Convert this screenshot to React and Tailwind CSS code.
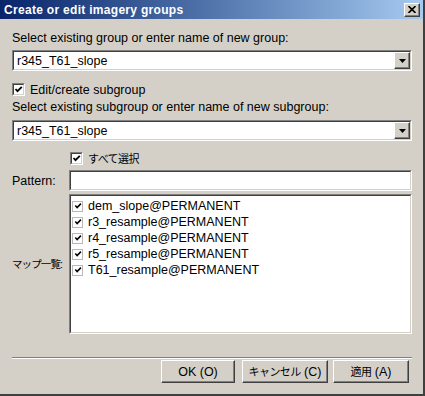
const sunken =
  "border border-t-[#808080] border-l-[#808080] border-b-white border-r-white";
const sunkenInner =
  "border border-t-[#404040] border-l-[#404040] border-b-[#d4d0c8] border-r-[#d4d0c8]";
const raised =
  "border border-t-white border-l-white border-b-[#404040] border-r-[#404040] shadow-[inset_-1px_-1px_#808080]";
const jp = "text-[11px] tracking-[-0.6px]";

function Check({ size = 9 }) {
  return (
    <svg width={size} height={size} viewBox="0 0 9 9" className="block">
      <path d="M1.5 4 L3.5 6.2 L7.8 1.8" fill="none" stroke="#000" strokeWidth="1.8" />
    </svg>
  );
}

function Checkbox() {
  return (
    <div className={`w-[13px] h-[13px] ${sunken} shrink-0`}>
      <div className={`w-full h-full bg-white ${sunkenInner} flex items-center justify-center`}>
        <Check />
      </div>
    </div>
  );
}

function ListCheck() {
  return (
    <div className="w-[11px] h-[11px] border border-[#b8b8b8] bg-white flex items-center justify-center shrink-0">
      <Check size={8} />
    </div>
  );
}

function Combo({ value }) {
  return (
    <div className={`h-[21px] ${sunken}`}>
      <div className={`h-full bg-white ${sunkenInner} flex items-center`}>
        <span className="flex-1 pl-[3px] text-black">{value}</span>
        <div className={`w-[16px] h-[17px] bg-[#d4d0c8] ${raised} flex items-center justify-center`}>
          <svg width="7" height="4" viewBox="0 0 7 4" className="block">
            <path d="M0 0 H7 L3.5 4 Z" fill="#000" />
          </svg>
        </div>
      </div>
    </div>
  );
}

function Button({ children }) {
  return (
    <div className={`h-[23px] bg-[#d4d0c8] ${raised} flex items-center justify-center text-black whitespace-nowrap`}>
      {children}
    </div>
  );
}

const maps = [
  "dem_slope@PERMANENT",
  "r3_resample@PERMANENT",
  "r4_resample@PERMANENT",
  "r5_resample@PERMANENT",
  "T61_resample@PERMANENT",
];

export default function App() {
  return (
    <div className="w-[425px] h-[396px] bg-[#d4d0c8] flex flex-col border-r-2 border-b-2 border-r-[#404040] border-b-[#404040] font-['Liberation_Sans','Noto_Sans_CJK_JP',sans-serif] text-[12.5px] leading-[14px] text-black overflow-hidden">
      <div className="h-[19px] shrink-0 flex items-center justify-between pl-[4px] pr-[3px] bg-gradient-to-r from-[#0a246a] to-[#a6caf0]">
        <span className="text-white font-bold text-[12px] tracking-[0.3px]">
          Create or edit imagery groups
        </span>
        <div className={`w-[16px] h-[14px] bg-[#d4d0c8] ${raised} flex items-center justify-center`}>
          <svg width="8" height="7" viewBox="0 0 8 7" className="block">
            <path d="M0.5 0 L7.5 7 M7.5 0 L0.5 7" stroke="#000" strokeWidth="1.6" />
          </svg>
        </div>
      </div>

      <div className="flex-1 flex flex-col pl-[12px] pr-[11px]">
        <div className="mt-[12px] h-[14px]">Select existing group or enter name of new group:</div>
        <div className="mt-[5px]">
          <Combo value="r345_T61_slope" />
        </div>

        <div className="mt-[12px] flex items-center gap-[5px] h-[13px]">
          <Checkbox />
          <span>Edit/create subgroup</span>
        </div>
        <div className="mt-[4px] h-[14px]">Select existing subgroup or enter name of new subgroup:</div>
        <div className="mt-[6px]">
          <Combo value="r345_T61_slope" />
        </div>

        <div className="mt-[11px] flex items-center gap-[5px] h-[13px] pl-[58px]">
          <Checkbox />
          <span className={jp}>すべて選択</span>
        </div>

        <div className="mt-[5px] flex items-center">
          <span className="w-[57px]">Pattern:</span>
          <div className={`flex-1 h-[21px] ${sunken}`}>
            <div className={`h-full bg-white ${sunkenInner}`} />
          </div>
        </div>

        <div className="mt-[3px] flex items-center">
          <span className="w-[57px] whitespace-nowrap text-[10.5px] tracking-[-0.9px]">マップ一覧:</span>
          <div className={`flex-1 h-[140px] ${sunken}`}>
            <div className={`h-full bg-white ${sunkenInner} pt-[2px] pl-[1px] flex flex-col`}>
              {maps.map((m) => (
                <div key={m} className="h-[16px] flex items-center gap-[5px]">
                  <ListCheck />
                  <span>{m}</span>
                </div>
              ))}
            </div>
          </div>
        </div>

        <div className="mt-[23px] border-t border-t-[#808080] border-b border-b-white" />

        <div className="mt-[1px] flex justify-end pr-[3px]">
          <div className="w-[74px]">
            <Button>OK (O)</Button>
          </div>
          <div className="w-[86px] ml-[7px]">
            <Button>
              <span className={jp}>キャンセル</span>&nbsp;(C)
            </Button>
          </div>
          <div className="w-[76px] ml-[5px]">
            <Button>
              <span className={jp}>適用</span>&nbsp;(A)
            </Button>
          </div>
        </div>
      </div>
    </div>
  );
}
